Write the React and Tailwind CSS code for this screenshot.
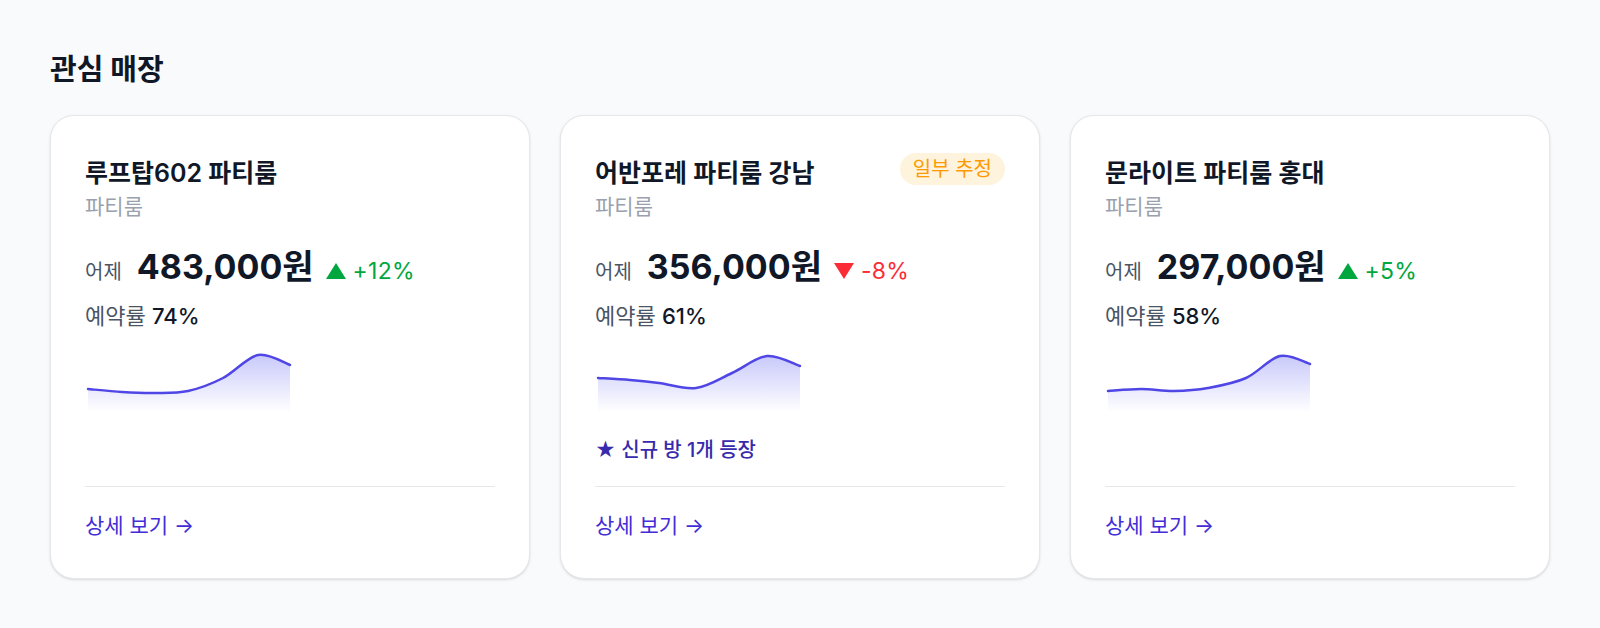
import React from 'react';

const stores = [
  {
    id: 'rooftop602',
    name: '루프탑602 파티룸',
    type: '파티룸',
    price: '483,000원',
    change: '+12%',
    up: true,
    rate: '74%',
    points: [[3, 39], [37, 42], [70, 43], [103, 41], [138, 28], [173, 5], [205, 15]],
  },
  {
    id: 'urban-gangnam',
    name: '어반포레 파티룸 강남',
    type: '파티룸',
    price: '356,000원',
    change: '-8%',
    up: false,
    rate: '61%',
    estimated: true,
    note: '신규 방 1개 등장',
    points: [[3, 28], [35, 30], [64, 33], [101, 38], [137, 23], [172, 6], [205, 16]],
  },
  {
    id: 'moonlight-hongdae',
    name: '문라이트 파티룸 홍대',
    type: '파티룸',
    price: '297,000원',
    change: '+5%',
    up: true,
    rate: '58%',
    points: [[3, 41], [36, 39], [69, 41], [103, 38], [141, 28], [175, 6], [205, 14]],
  },
];

// catmull-rom -> cubic bezier
function smoothPath(pts) {
  let d = `M${pts[0][0]},${pts[0][1]}`;
  for (let i = 0; i < pts.length - 1; i++) {
    const p0 = pts[i - 1] || pts[i];
    const p1 = pts[i];
    const p2 = pts[i + 1];
    const p3 = pts[i + 2] || p2;
    const c1x = p1[0] + (p2[0] - p0[0]) / 6;
    const c1y = p1[1] + (p2[1] - p0[1]) / 6;
    const c2x = p2[0] - (p3[0] - p1[0]) / 6;
    const c2y = p2[1] - (p3[1] - p1[1]) / 6;
    d += ` C${c1x},${c1y} ${c2x},${c2y} ${p2[0]},${p2[1]}`;
  }
  return d;
}

function Sparkline({ id, points }) {
  const line = smoothPath(points);
  const first = points[0];
  const last = points[points.length - 1];
  const area = `${line} L${last[0]},62 L${first[0]},62 Z`;
  return (
    <svg width="210" height="62" viewBox="0 0 210 62" className="block">
      <defs>
        <linearGradient id={`fill-${id}`} x1="0" y1="0" x2="0" y2="1">
          <stop offset="0%" stopColor="#6366f1" stopOpacity="0.35" />
          <stop offset="100%" stopColor="#6366f1" stopOpacity="0" />
        </linearGradient>
      </defs>
      <path d={area} fill={`url(#fill-${id})`} />
      <path d={line} fill="none" stroke="#4f46e5" strokeWidth="2.5" strokeLinecap="round" />
    </svg>
  );
}

function Trend({ up, value }) {
  return (
    <span
      className={`ml-[12px] flex items-baseline gap-[7px] text-[23px] leading-none tracking-[0.01em] ${
        up ? 'text-green-600' : 'text-red-500'
      }`}
    >
      <svg width="20" height="16" viewBox="0 0 20 16" className="fill-current">
        {up ? <polygon points="10,0 20,16 0,16" /> : <polygon points="0,0 20,0 10,16" />}
      </svg>
      {value}
    </span>
  );
}

function StoreCard({ store }) {
  return (
    <div className="flex flex-col rounded-3xl border border-gray-200 bg-white px-[34px] pt-[37px] pb-[38px] shadow-sm">
      <div className="flex-1">
        <div className="flex items-start justify-between">
          <h3 className="text-[25px] leading-10 font-semibold text-gray-900">{store.name}</h3>
          {store.estimated && (
            <span className="flex h-[32px] items-center rounded-full bg-[#fef3dc] px-[13px] text-[20px] text-amber-500">
              일부 추정
            </span>
          )}
        </div>
        <p className="text-[21px] leading-7 text-gray-400">{store.type}</p>

        <div className="mt-[26px] flex h-10 items-baseline">
          <span className="text-[20px] leading-none text-gray-600">어제</span>
          <span className="ml-[15px] text-[34px] leading-10 font-bold text-gray-900">
            {store.price}
          </span>
          <Trend up={store.up} value={store.change} />
        </div>

        <p className="mt-[15px] text-[22px] leading-7 text-gray-600">
          예약률 <span className="font-medium text-gray-900">{store.rate}</span>
        </p>

        <div className="mt-[20px]">
          <Sparkline id={store.id} points={store.points} />
        </div>

        {store.note && (
          <p className="mt-[24px] text-[20px] leading-7 font-medium text-indigo-800">
            ★ {store.note}
          </p>
        )}
      </div>

      <div className="mt-[22px] border-t border-gray-200 pt-[25px]">
        <a href="#" className="text-[21px] leading-7 text-indigo-700">
          상세 보기 →
        </a>
      </div>
    </div>
  );
}

export default function App() {
  return (
    <div className="min-h-screen bg-gray-50 px-[50px] pt-[50px] font-['Inter','Noto_Sans_CJK_KR',sans-serif]">
      <h2 className="mb-[25px] text-[29px] leading-10 font-bold text-gray-900">관심 매장</h2>
      <div className="grid grid-cols-3 gap-[30px]">
        {stores.map((s) => (
          <StoreCard key={s.id} store={s} />
        ))}
      </div>
    </div>
  );
}
